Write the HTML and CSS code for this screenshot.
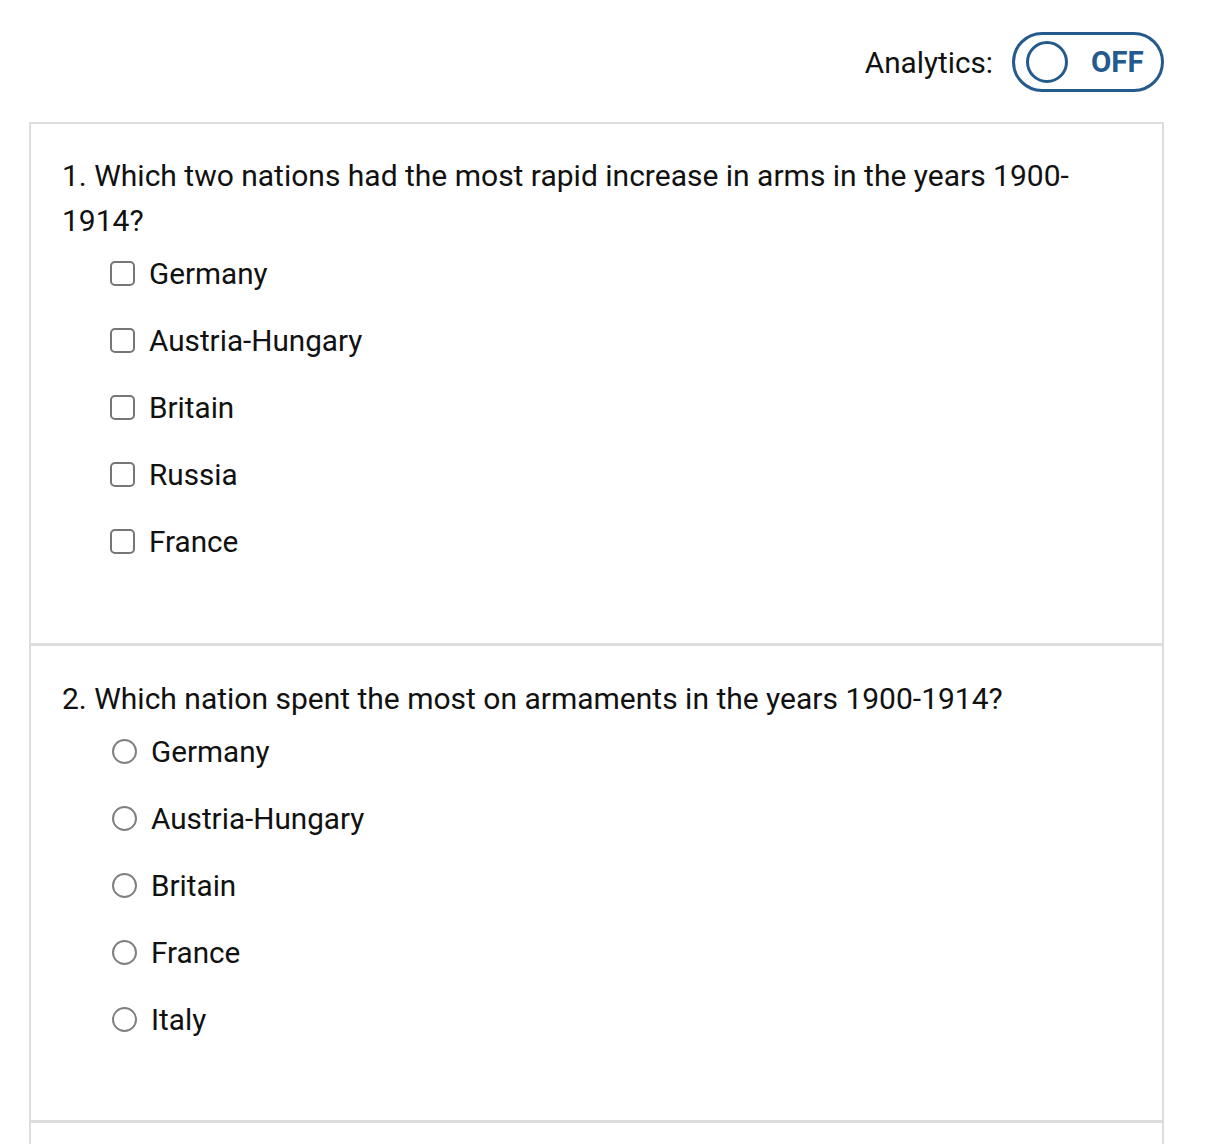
FILE: index.html
```html
<!DOCTYPE html>
<html>
<head>
<meta charset="utf-8">
<link rel="stylesheet" href="styles.css">
</head>
<body>
<div class="topbar">
  <span class="label">Analytics:</span>
  <div class="toggle"><span class="knob"></span><span class="state">OFF</span></div>
</div>
<div class="card">
  <section class="question">
    <p class="qtext">1. Which two nations had the most rapid increase in arms in the years 1900-1914?</p>
    <ul class="options">
      <li class="opt"><input type="checkbox" class="check"><span>Germany</span></li>
      <li class="opt"><input type="checkbox" class="check"><span>Austria-Hungary</span></li>
      <li class="opt"><input type="checkbox" class="check"><span>Britain</span></li>
      <li class="opt"><input type="checkbox" class="check"><span>Russia</span></li>
      <li class="opt"><input type="checkbox" class="check"><span>France</span></li>
    </ul>
  </section>
  <section class="question">
    <p class="qtext">2. Which nation spent the most on armaments in the years 1900-1914?</p>
    <ul class="options radios">
      <li class="opt"><input type="radio" name="q2" class="radio"><span>Germany</span></li>
      <li class="opt"><input type="radio" name="q2" class="radio"><span>Austria-Hungary</span></li>
      <li class="opt"><input type="radio" name="q2" class="radio"><span>Britain</span></li>
      <li class="opt"><input type="radio" name="q2" class="radio"><span>France</span></li>
      <li class="opt"><input type="radio" name="q2" class="radio"><span>Italy</span></li>
    </ul>
  </section>
  <section class="question empty"></section>
</div>
</body>
</html>
```
FILE: styles.css
```css
html, body {
  margin: 0;
  padding: 0;
  background: #fff;
}
body {
  font-family: Roboto, "Liberation Sans", sans-serif;
  color: #111;
  overflow: hidden;
  height: 1144px;
}
.topbar {
  display: flex;
  justify-content: flex-end;
  align-items: center;
  gap: 19px;
  padding-top: 32px;
  padding-right: 56px;
  height: 60px;
}
.label {
  font-size: 29.7px;
  color: #111;
}
.toggle {
  box-sizing: border-box;
  width: 152px;
  height: 60px;
  border: 3px solid #245a8c;
  border-radius: 30px;
  display: flex;
  align-items: center;
  padding-left: 11px;
}
.knob {
  box-sizing: border-box;
  width: 42px;
  height: 42px;
  border: 3px solid #245a8c;
  border-radius: 50%;
}
.state {
  margin-left: 23px;
  font-size: 29.5px;
  font-weight: 700;
  color: #245a8c;
}
.card {
  margin-top: 30px;
  margin-left: 29px;
  width: 1135px;
  box-sizing: border-box;
  border: 2px solid #ddd;
  border-bottom: none;
}
.question {
  border-bottom: 3px solid #ddd;
  padding: 29px 60px 80px 31px;
}
.question + .question {
  padding-top: 30px;
  padding-bottom: 79px;
}
.empty {
  min-height: 100px;
}
.qtext {
  margin: 0;
  font-size: 30px;
  line-height: 45px;
}
.options {
  list-style: none;
  margin: 8px 0 0 0;
  padding: 0 0 0 48px;
  display: flex;
  flex-direction: column;
  gap: 23px;
}
.opt {
  height: 44px;
  display: flex;
  align-items: center;
  gap: 14px;
  font-size: 29.7px;
}
.check {
  appearance: none;
  -webkit-appearance: none;
  margin: 0;
  width: 25px;
  height: 25px;
  box-sizing: border-box;
  border: 2px solid #767676;
  border-radius: 5px;
  background: #fff;
}
.radios {
  padding-left: 50px;
}
.radio {
  appearance: none;
  -webkit-appearance: none;
  margin: 0;
  width: 25px;
  height: 25px;
  box-sizing: border-box;
  border: 2px solid #808080;
  border-radius: 50%;
  background: #fff;
}
```
